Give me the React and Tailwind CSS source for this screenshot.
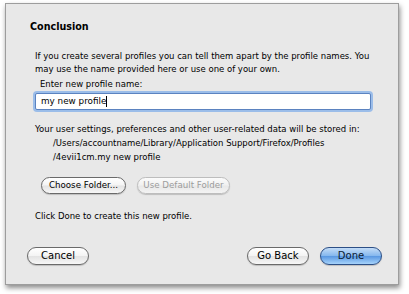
const font = { fontFamily: '"DejaVu Sans", "Lucida Grande", sans-serif' }

function AquaButton({ children, className = '', disabled = false, primary = false }) {
  let skin =
    'border-[#6a6a6a] text-black bg-[linear-gradient(#ffffff,#f4f4f4_48%,#e3e3e3_52%,#f7f7f7)]'
  if (disabled) {
    skin = 'border-[#bdbdbd] text-[#9c9c9c] bg-[linear-gradient(#fbfbfb,#f1f1f1_48%,#e8e8e8_52%,#f3f3f3)]'
  }
  if (primary) {
    skin = 'border-[#2c4f86] text-[#0b1a33] bg-[linear-gradient(#c3dcf7,#86b8ee_48%,#5a98e2_52%,#a6d3fb)]'
  }
  return (
    <div
      className={`flex items-center justify-center rounded-full border leading-none shadow-[0_1px_1px_rgba(0,0,0,0.18)] ${skin} ${className}`}
    >
      {children}
    </div>
  )
}

export default function App() {
  return (
    <div className="w-[409px] h-[294px] bg-white pt-[3px] pl-[5px]" style={font}>
      <div className="w-[394px] h-[282px] bg-[#e8e8e8] border border-[#9d9d9d] shadow-[1px_3px_5px_rgba(0,0,0,0.45)] flex flex-col text-black">
        <div className="mt-[17px] ml-[24px] text-[9.6px] font-bold leading-[12px]">Conclusion</div>

        <p className="mt-[17px] ml-[29px] text-[8.5px] leading-[13px] whitespace-nowrap">
          If you create several profiles you can tell them apart by the profile names. You
          <br />
          may use the name provided here or use one of your own.
        </p>

        <div className="mt-[2px] ml-[34px] text-[8.5px] leading-[13px]">Enter new profile name:</div>

        <div className="mt-[2px] ml-[29px] w-[336px] h-[17px] bg-white border border-[#5b83c0] rounded-[2px] shadow-[0_0_0_2px_#9bbde9] flex items-center pl-[5px] text-[8.8px]">
          <span>my new profile</span>
          <span className="w-px h-[11px] bg-black" />
        </div>

        <div className="mt-[13px] ml-[29px] text-[8.5px] leading-[13px] whitespace-nowrap">
          Your user settings, preferences and other user-related data will be stored in:
        </div>
        <div className="ml-[47px] text-[8.5px] leading-[14px] whitespace-nowrap">
          /Users/accountname/Library/Application Support/Firefox/Profiles
          <br />
          /4evii1cm.my new profile
        </div>

        <div className="mt-[13px] ml-[35px] flex gap-[11px] text-[8.7px]">
          <AquaButton className="w-[85px] h-[17px]">Choose Folder...</AquaButton>
          <AquaButton className="w-[93px] h-[17px]" disabled>Use Default Folder</AquaButton>
        </div>

        <div className="mt-[16px] ml-[29px] text-[8.5px] leading-[13px]">Click Done to create this new profile.</div>

        <div className="mt-[24px] ml-[21px] mr-[16px] flex items-center text-[10px]">
          <AquaButton className="w-[62px] h-[18px]">Cancel</AquaButton>
          <div className="flex-1" />
          <AquaButton className="w-[62px] h-[18px]">Go Back</AquaButton>
          <AquaButton className="w-[62px] h-[18px] ml-[11px]" primary>Done</AquaButton>
        </div>
      </div>
    </div>
  )
}
